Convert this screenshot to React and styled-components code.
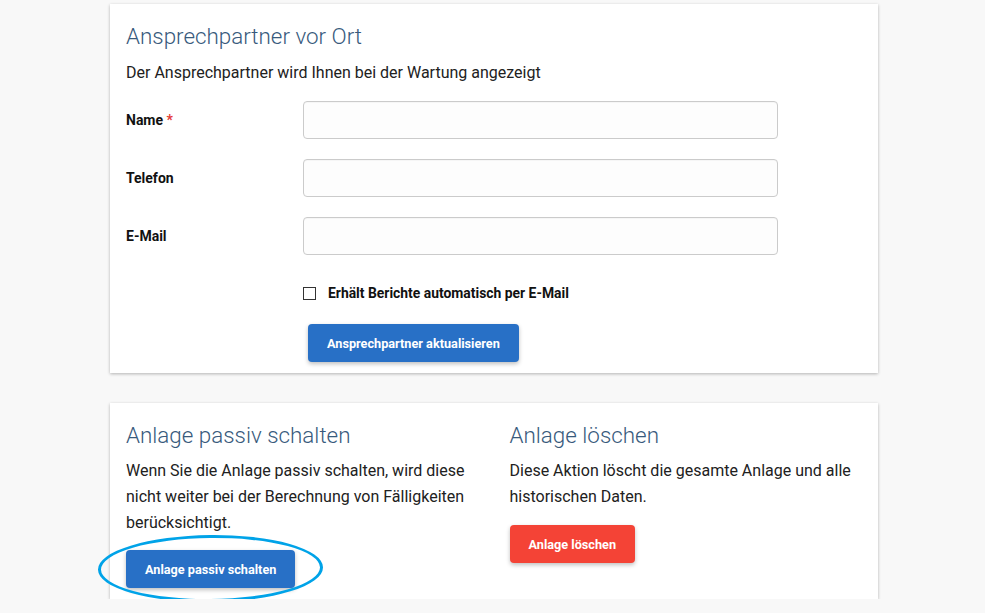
import React from "react";
import styled, { createGlobalStyle } from "styled-components";

const Global = createGlobalStyle`
  html, body {
    margin: 0;
    padding: 0;
    background: #f8f8f8;
    font-family: Roboto, "Liberation Sans", sans-serif;
    color: #212121;
  }
`;

const Page = styled.div`
  width: 768px;
  margin: 4px 0 0 110px;
  display: flex;
  flex-direction: column;
  gap: 30px;
`;

const Card = styled.section`
  background: #fff;
  box-shadow: 0 1px 3px rgba(0, 0, 0, 0.28);
  padding: 18px 16px 11px;
  display: ${(p) => (p.$split ? "grid" : "block")};
  grid-template-columns: 1fr 1fr;
  column-gap: 31px;
`;

const Column = styled.div`
  display: flex;
  flex-direction: column;
  align-items: flex-start;
`;

const Title = styled.h2`
  margin: 0;
  font-weight: 300;
  font-size: 22.4px;
  line-height: 28px;
  color: #385a7c;
`;

const Text = styled.p`
  margin: ${(p) => p.$mt || "9px"} 0 0;
  font-size: 16px;
  line-height: 26px;
  color: #212121;
`;

const Form = styled.div`
  margin-top: 15px;
  display: grid;
  grid-template-columns: 177px 475px;
  row-gap: 20px;
  align-items: center;
`;

const Label = styled.label`
  font-size: 14px;
  font-weight: 700;
  color: #111;
`;

const Star = styled.span`
  color: #e53935;
`;

const Input = styled.input`
  box-sizing: border-box;
  height: 38px;
  width: 100%;
  border: 1px solid #cbcbcb;
  border-radius: 4px;
  background: #fdfdfd;
  box-shadow: inset 0 1px 1px rgba(0, 0, 0, 0.03);
  font: inherit;
`;

const CheckRow = styled.div`
  grid-column: 2;
  display: flex;
  align-items: center;
  gap: 12px;
  margin-top: 10px;
`;

const Box = styled.span`
  width: 11px;
  height: 11px;
  border: 1px solid #333;
  background: #fff;
`;

const CheckText = styled.span`
  font-size: 13.9px;
  font-weight: 700;
  color: #111;
`;

const Button = styled.button`
  height: 38px;
  padding: 0 19px;
  border: none;
  border-radius: 4px;
  background: ${(p) => (p.$danger ? "#f44336" : "#2870c6")};
  color: #fff;
  font-family: Roboto, "Liberation Sans", sans-serif;
  font-size: 12.7px;
  font-weight: 700;
  box-shadow: 0 2px 4px rgba(0, 0, 0, 0.25);
  cursor: pointer;
`;

const ButtonRow = styled.div`
  grid-column: 2;
  padding-left: 5px;
  margin-top: 3px;
`;

const Highlight = styled.div`
  position: relative;
  display: flex;
  margin-top: ${(p) => p.$mt || "14px"};
`;

const Ring = styled.span`
  position: absolute;
  left: -28px;
  top: -15px;
  width: 219px;
  height: 61px;
  border: 3px solid #00a3e8;
  border-radius: 50%;
  transform: rotate(-0.6deg);
  pointer-events: none;
`;

export default function App() {
  return (
    <>
      <Global />
      <Page>
        <Card>
          <Title>Ansprechpartner vor Ort</Title>
          <Text $mt="10px">
            Der Ansprechpartner wird Ihnen bei der Wartung angezeigt
          </Text>
          <Form>
            <Label>
              Name <Star>*</Star>
            </Label>
            <Input />
            <Label>Telefon</Label>
            <Input />
            <Label>E-Mail</Label>
            <Input />
            <CheckRow>
              <Box />
              <CheckText>Erhält Berichte automatisch per E-Mail</CheckText>
            </CheckRow>
            <ButtonRow>
              <Button>Ansprechpartner aktualisieren</Button>
            </ButtonRow>
          </Form>
        </Card>
        <Card $split>
          <Column>
            <Title>Anlage passiv schalten</Title>
            <Text>
              Wenn Sie die Anlage passiv schalten, wird diese nicht weiter bei
              der Berechnung von Fälligkeiten berücksichtigt.
            </Text>
            <Highlight>
              <Button>Anlage passiv schalten</Button>
              <Ring />
            </Highlight>
          </Column>
          <Column>
            <Title>Anlage löschen</Title>
            <Text>
              Diese Aktion löscht die gesamte Anlage und alle historischen
              Daten.
            </Text>
            <Highlight $mt="15px">
              <Button $danger>Anlage löschen</Button>
            </Highlight>
          </Column>
        </Card>
      </Page>
    </>
  );
}
